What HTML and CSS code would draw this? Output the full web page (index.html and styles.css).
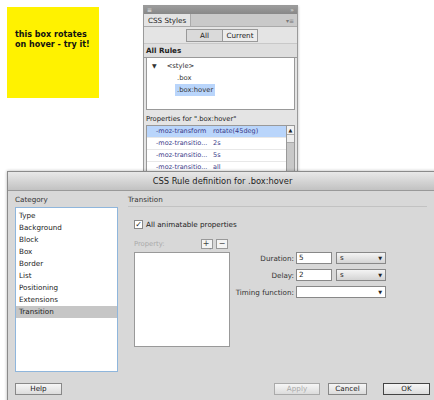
FILE: index.html
```html
<!DOCTYPE html>
<html>
<head>
<meta charset="utf-8">
<link rel="stylesheet" href="styles.css">
</head>
<body>
<div class="desk">
  <div class="yellow"><p>this box rotates<br>on hover - try it!</p></div>

  <div class="panel">
    <div class="ptitle"><span class="grip">≡</span><span class="dbl">»</span></div>
    <div class="ptabs"><span class="ptab">CSS Styles</span><span class="pmenu">▾≡</span></div>
    <div class="ptool"><div class="seg"><span class="on">All</span><span>Current</span></div></div>
    <div class="phead">All Rules</div>
    <div class="rules">
      <div class="rule r0"><span class="tri">▼</span>&lt;style&gt;</div>
      <div class="rule r1">.box</div>
      <div class="rule r1"><span class="sel">.box:hover</span></div>
    </div>
    <div class="phead2">Properties for ".box:hover"</div>
    <div class="props">
      <div class="ptable">
        <div class="prow hl"><span class="pn">-moz-transform</span><span class="pv">rotate(45deg)</span></div>
        <div class="prow"><span class="pn">-moz-transitio...</span><span class="pv">2s</span></div>
        <div class="prow"><span class="pn">-moz-transitio...</span><span class="pv">5s</span></div>
        <div class="prow"><span class="pn">-moz-transitio...</span><span class="pv">all</span></div>
      </div>
      <div class="sbar"><div class="sup">▲</div><div class="sthumb"></div></div>
    </div>
  </div>

  <div class="dialog">
    <div class="dtitle">CSS Rule definition for .box:hover</div>
    <div class="dbody">
      <div class="dleft">
        <div class="lbl">Category</div>
        <div class="cats">
          <div class="cat">Type</div>
          <div class="cat">Background</div>
          <div class="cat">Block</div>
          <div class="cat">Box</div>
          <div class="cat">Border</div>
          <div class="cat">List</div>
          <div class="cat">Positioning</div>
          <div class="cat">Extensions</div>
          <div class="cat cur">Transition</div>
        </div>
        <div class="btn help">Help</div>
      </div>
      <div class="dright">
        <div class="sect">Transition</div>
        <div class="chk"><span class="box">✓</span>All animatable properties</div>
        <div class="mid">
          <div class="propcol">
            <div class="proptop"><span class="dim">Property:</span><span class="sb">+<sub>,</sub></span><span class="sb">−</span></div>
            <div class="plist"></div>
          </div>
          <div class="form">
            <div class="frow"><span class="fl">Duration:</span><span class="inp">5</span><span class="dd">s<i>▼</i></span></div>
            <div class="frow"><span class="fl">Delay:</span><span class="inp">2</span><span class="dd">s<i>▼</i></span></div>
            <div class="frow"><span class="fl">Timing function:</span><span class="combo"><i>▼</i></span></div>
          </div>
        </div>
        <div class="btns">
          <div class="btn dis">Apply</div>
          <div class="btn cancel">Cancel</div>
          <div class="btn ok">OK</div>
        </div>
      </div>
    </div>
  </div>
</div>
</body>
</html>
```
FILE: styles.css
```css
* { box-sizing: border-box; }
html, body { margin: 0; padding: 0; background: #fff; }
body { font-family: "DejaVu Sans", "Liberation Sans", sans-serif; font-size: 7.2px; color: #222; }
.desk { position: relative; width: 434px; height: 400px; overflow: hidden; }

.yellow { position: absolute; left: 7px; top: 7px; width: 92px; height: 91px; background: #fff200; padding: 23px 0 0 8px; }
.yellow p { margin: 0; font-weight: bold; font-size: 8px; line-height: 10px; color: #111; white-space: nowrap; }

.panel { position: absolute; left: 143px; top: 5px; width: 155px; height: 175px; border: 1px solid #9a9a9a; background: #e4e4e4; display: flex; flex-direction: column; box-shadow: 1px 1px 2px rgba(0,0,0,.15); }
.ptitle { height: 8px; background: linear-gradient(#9c9c9c, #888); display: flex; justify-content: space-between; align-items: center; padding: 0 3px; font-size: 6px; color: #eee; line-height: 8px; }
.ptabs { height: 13px; background: #c9c9c9; border-bottom: 1px solid #aaa; display: flex; justify-content: space-between; align-items: stretch; }
.ptab { background: #e4e4e4; padding: 0 4px; font-size: 7.2px; line-height: 13px; border-right: 1px solid #aaa; color: #222; }
.pmenu { font-size: 6px; color: #777; padding-right: 3px; line-height: 13px; }
.ptool { height: 17px; display: flex; justify-content: center; align-items: center; padding-left: 3px; border-bottom: 1px solid #c8c8c8; }
.seg { display: flex; border: 1px solid #999; background: #ececec; }
.seg span { width: 35px; text-align: center; font-size: 7.2px; line-height: 11px; }
.seg span + span { border-left: 1px solid #999; }
.seg .on { background: #dadada; }
.phead { height: 14px; background: #dedede; font-weight: bold; font-size: 7.2px; line-height: 14px; padding-left: 2px; border-bottom: 1px solid #999; }
.rules { height: 52px; background: #fff; border: 1px solid #999; border-top: none; margin: 0 2px; padding-top: 2px; }
.rule { font-size: 6.8px; line-height: 12px; color: #333; }
.r0 { padding-left: 5px; }
.tri { font-size: 6px; margin-right: 10px; }
.r1 { padding-left: 30px; }
.sel { background: #b9d5fb; padding: 0 2px; display: inline-block; margin-left: -2px; }
.phead2 { height: 15px; font-size: 6.8px; line-height: 19px; padding-left: 2px; color: #222; }
.props { display: flex; margin: 0 2px; border: 1px solid #999; background: #fff; flex: 1; }
.ptable { flex: 1; }
.prow { display: flex; height: 12px; line-height: 11px; border-bottom: 1px solid #e8e8e8; font-size: 6.5px; color: #3a3a88; }
.prow.hl { background: #b9d5fb; }
.pn { width: 65px; padding-left: 9px; white-space: nowrap; }
.pv { padding-left: 1px; }
.sbar { width: 8px; background: #c8c8c8; border-left: 1px solid #999; }
.sup { height: 9px; background: #f2f2f2; font-size: 5px; text-align: center; line-height: 9px; border-bottom: 1px solid #aaa; }
.sthumb { height: 8px; background: #eee; border-bottom: 1px solid #aaa; }

.dialog { position: absolute; left: 7px; top: 171px; width: 431px; height: 235px; background: #d8d8d8; border: 1px solid #8a8a8a; box-shadow: 0 0 3px rgba(0,0,0,.3); display: flex; flex-direction: column; }
.dtitle { height: 19px; background: linear-gradient(#e8e8e8, #c2c2c2); border-bottom: 1px solid #999; text-align: center; font-size: 8.3px; line-height: 19px; color: #222; }
.dbody { flex: 1; display: flex; }
.dleft { width: 120px; padding: 4px 0 0 7px; display: flex; flex-direction: column; }
.lbl { font-size: 7.2px; line-height: 10px; height: 12px; color: #333; }
.cats { width: 103px; height: 165px; background: #fff; border: 1px solid #8fb6dc; padding-top: 2px; }
.cat { font-size: 7.2px; line-height: 12px; height: 12px; padding-left: 3px; color: #222; }
.cat.cur { background: #c6c6c6; }
.btn { height: 12px; border: 1px solid #888; background: linear-gradient(#f6f6f6, #dcdcdc); font-size: 7.2px; line-height: 10px; text-align: center; color: #222; }
.help { width: 47px; margin-top: 11px; }
.dright { flex: 1; display: flex; flex-direction: column; padding-top: 4px; }
.sect { font-size: 7.2px; line-height: 10px; height: 12px; border-bottom: 1px solid #c2c2c2; margin-right: 10px; color: #333; }
.chk { margin: 12px 0 0 6px; font-size: 7.2px; line-height: 11px; display: flex; align-items: center; color: #222; }
.chk .box { width: 9px; height: 9px; border: 1px solid #888; background: #fff; font-size: 8px; line-height: 8px; text-align: center; margin-right: 3px; color: #222; font-weight: bold; }
.mid { display: flex; margin-top: 7px; }
.propcol { width: 96px; margin-left: 6px; }
.proptop { display: flex; align-items: center; height: 13px; padding-right: 2px; }
.dim { color: #aaa; font-size: 6.8px; flex: 1; }
.sb { width: 12px; height: 10px; border: 1px solid #999; background: #f4f4f4; font-size: 8px; line-height: 8px; text-align: center; margin-left: 3px; color: #444; }
.sb sub { font-size: 5px; }
.plist { height: 95px; background: #fff; border: 1px solid #999; margin-top: 2px; }
.form { display: flex; flex-direction: column; gap: 5px; margin-top: 15px; }
.frow { display: flex; align-items: center; height: 12px; }
.fl { width: 66px; text-align: right; font-size: 7.2px; color: #333; padding-right: 2px; }
.inp { width: 36px; height: 12px; background: #fff; border: 1px solid #888; font-size: 7.2px; line-height: 10px; padding-left: 2px; }
.dd { width: 50px; height: 12px; margin-left: 4px; border: 1px solid #888; background: linear-gradient(#f4f4f4, #d4d4d4); font-size: 7px; line-height: 10px; padding-left: 3px; display: flex; justify-content: space-between; }
.dd i, .combo i { font-style: normal; font-size: 5px; padding-right: 3px; }
.combo { width: 90px; height: 12px; background: #fff; border: 1px solid #888; display: flex; justify-content: flex-end; align-items: center; line-height: 10px; }
.btns { margin-top: auto; margin-bottom: 10px; display: flex; justify-content: flex-end; padding-right: 7px; }
.btns .btn { margin-left: 8px; }
.btns .dis { width: 46px; color: #aaa; border-color: #aaa; }
.btns .cancel { width: 39px; }
.btns .ok { width: 47px; margin-left: 16px; border: 1px solid #444; }
```
